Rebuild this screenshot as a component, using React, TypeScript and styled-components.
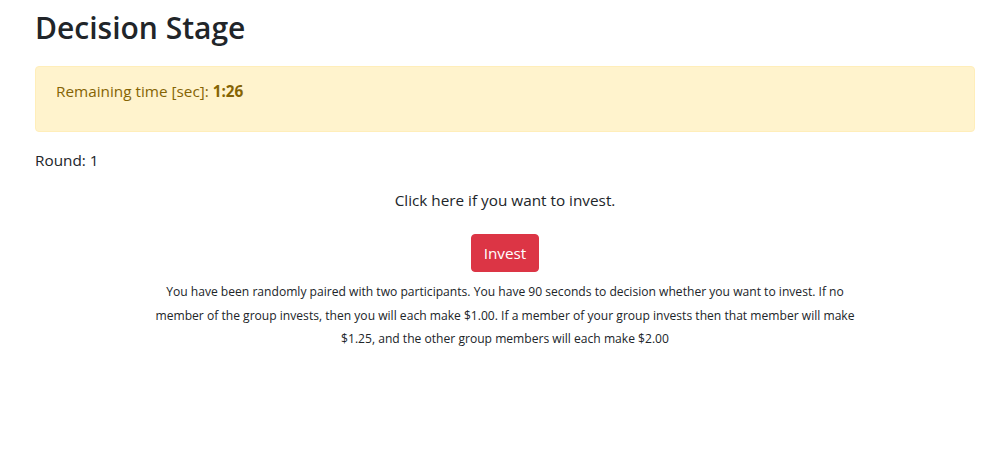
import React from "react";
import styled, { createGlobalStyle } from "styled-components";

const Global = createGlobalStyle`
  html, body { margin: 0; padding: 0; background: #fff; }
  body {
    font-family: "Open Sans", "Noto Sans", "Liberation Sans", sans-serif;
    font-size: 15.3px;
    line-height: 24px;
    color: #212529;
  }
`;

const Page = styled.div`
  width: 940px;
  padding: 9px 0 0 35px;
`;

const Title = styled.h2`
  margin: 0 0 19px;
  font-size: 30px;
  font-weight: 600;
  line-height: 38px;
  color: #212529;
`;

const Alert = styled.div`
  background: #fff3cd;
  border: 1px solid #ffeeba;
  border-radius: 4px;
  color: #856404;
  padding: 12px 20px;
  margin-bottom: 16px;
`;

const Para = styled.p<{ $center?: boolean }>`
  margin: 0 0 16px;
  text-align: ${(p) => (p.$center ? "center" : "left")};
`;

const ButtonRow = styled.div`
  display: flex;
  justify-content: center;
  margin-top: 22px;
`;

const Button = styled.button`
  font-family: inherit;
  font-size: 15.3px;
  line-height: 24px;
  padding: 6px 12px;
  border: 1px solid #dc3545;
  background: #dc3545;
  color: #fff;
  border-radius: 4px;
`;

const Note = styled.p`
  margin: 8px 0 0;
  font-size: 12.1px;
  line-height: 23.5px;
  text-align: center;
`;

export default function App() {
  return (
    <>
      <Global />
      <Page>
        <Title>Decision Stage</Title>
        <Alert>
          <Para>
            Remaining time [sec]: <b>1:26</b>
          </Para>
        </Alert>
        <Para>Round: 1</Para>
        <Para $center>Click here if you want to invest.</Para>
        <ButtonRow>
          <Button>Invest</Button>
        </ButtonRow>
        <Note>
          You have been randomly paired with two participants. You have 90 seconds to decision whether you want to invest. If no
          <br />
          member of the group invests, then you will each make $1.00. If a member of your group invests then that member will make
          <br />
          $1.25, and the other group members will each make $2.00
        </Note>
      </Page>
    </>
  );
}
